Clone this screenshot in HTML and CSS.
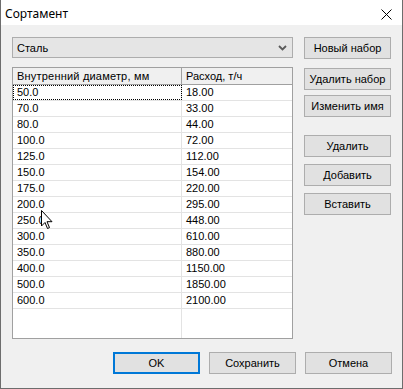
FILE: index.html
```html
<!DOCTYPE html>
<html lang="ru">
<head>
<meta charset="utf-8">
<title>Сортамент</title>
<link rel="stylesheet" href="styles.css">
</head>
<body>
<div class="window">
  <div class="titlebar">
    <span class="title">Сортамент</span>
    <svg class="close" width="11" height="11" viewBox="0 0 11 11"><path d="M0.5 0.5 L10.5 10.5 M10.5 0.5 L0.5 10.5" stroke="#000" stroke-width="1" fill="none"/></svg>
  </div>
  <div class="content">
    <div class="main">
      <div class="left">
        <div class="combo">
          <span>Сталь</span>
          <svg class="chev" width="9" height="6" viewBox="0 0 9 6"><path d="M1 1 L4.5 4.5 L8 1" stroke="#5a5a5a" stroke-width="1.8" fill="none"/></svg>
        </div>
        <div class="grid">
          <div class="row head">
            <div class="c1 wide">Внутренний диаметр, мм</div>
            <div class="c2">Расход, т/ч</div>
          </div>
          <div class="row"><div class="c1 focus">50.0</div><div class="c2">18.00</div></div>
          <div class="row"><div class="c1">70.0</div><div class="c2">33.00</div></div>
          <div class="row"><div class="c1">80.0</div><div class="c2">44.00</div></div>
          <div class="row"><div class="c1">100.0</div><div class="c2">72.00</div></div>
          <div class="row"><div class="c1">125.0</div><div class="c2">112.00</div></div>
          <div class="row"><div class="c1">150.0</div><div class="c2">154.00</div></div>
          <div class="row"><div class="c1">175.0</div><div class="c2">220.00</div></div>
          <div class="row"><div class="c1">200.0</div><div class="c2">295.00</div></div>
          <div class="row"><div class="c1">250.0</div><div class="c2">448.00</div></div>
          <div class="row"><div class="c1">300.0</div><div class="c2">610.00</div></div>
          <div class="row"><div class="c1">350.0</div><div class="c2">880.00</div></div>
          <div class="row"><div class="c1">400.0</div><div class="c2">1150.00</div></div>
          <div class="row"><div class="c1">500.0</div><div class="c2">1850.00</div></div>
          <div class="row"><div class="c1">600.0</div><div class="c2">2100.00</div></div>
          <div class="row filler"><div class="c1"></div><div class="c2"></div></div>
        </div>
      </div>
      <div class="right">
        <button class="btn b1">Новый набор</button>
        <button class="btn b2">Удалить набор</button>
        <button class="btn b3">Изменить имя</button>
        <button class="btn b4">Удалить</button>
        <button class="btn b5">Добавить</button>
        <button class="btn b6">Вставить</button>
      </div>
    </div>
    <div class="footer">
      <button class="btn default">OK</button>
      <button class="btn">Сохранить</button>
      <button class="btn">Отмена</button>
    </div>
  </div>
  <svg class="cursor" width="13" height="20" viewBox="0 0 13 20"><path d="M0.5 0.5 L0.5 16 L4 12.5 L6.5 18.5 L8.5 17.6 L6 11.7 L11 11.7 Z" fill="#fff" stroke="#000" stroke-width="1" stroke-linejoin="miter"/></svg>
</div>
</body>
</html>
```
FILE: styles.css
```css
html, body {
  margin: 0;
  padding: 0;
  background: #f0f0f0;
}
.window {
  position: relative;
  width: 401px;
  height: 388px;
  border-left: 1px solid #6d6d6d;
  border-right: 1px solid #6d6d6d;
  border-bottom: 1px solid #6d6d6d;
  background: #f0f0f0;
  display: flex;
  flex-direction: column;
  font-family: "Liberation Sans", Arial, sans-serif;
  font-size: 11px;
  color: #000;
}
.titlebar {
  height: 25px;
  background: #fff;
  display: flex;
  align-items: center;
  justify-content: space-between;
  padding: 0 10px 0 4px;
  flex-shrink: 0;
}
.title {
  font-family: "Noto Sans", "Liberation Sans", sans-serif;
  font-size: 12px;
  padding-top: 1px;
}
.close {
  display: block;
  margin-top: 3px;
}
.content {
  padding: 12px 10px 0 11px;
  display: flex;
  flex-direction: column;
}
.main {
  display: flex;
  gap: 11px;
}
.left {
  width: 281px;
  display: flex;
  flex-direction: column;
  gap: 9px;
}
.combo {
  height: 19px;
  border: 1px solid #adadad;
  background: #e5e5e5;
  display: flex;
  align-items: center;
  justify-content: space-between;
  padding: 0 5px 0 4px;
}
.chev { display: block; margin-top: 1px; }
.grid {
  height: 270px;
  border: 1px solid #a0a0a0;
  background: #fff;
  display: flex;
  flex-direction: column;
}
.row {
  display: flex;
  height: 15px;
  border-bottom: 1px solid #e3e3e3;
  line-height: 15px;
}
.row.head {
  height: 16px;
  line-height: 16px;
  background: #f0f0f0;
  border-bottom: 1px solid #a0a0a0;
}
.c1 {
  width: 164px;
  padding-left: 4px;
  border-right: 1px solid #e3e3e3;
  box-sizing: content-box;
}
.head .c1 { border-right-color: #a0a0a0; }
.wide { letter-spacing: 0.2px; }
.c2 {
  flex: 1;
  padding-left: 4px;
}
.focus {
  outline: 1px dotted #000;
  outline-offset: -1px;
}
.row.filler {
  flex: 1;
  border-bottom: none;
}
.right {
  width: 87px;
  display: flex;
  flex-direction: column;
}
.btn {
  height: 22px;
  width: 87px;
  border: 1px solid #adadad;
  background: #e1e1e1;
  font-family: "Liberation Sans", Arial, sans-serif;
  font-size: 11px;
  color: #000;
  padding: 0;
  margin: 0;
}
.b2 { margin-top: 9px; }
.b3 { margin-top: 5px; }
.b4 { margin-top: 18px; }
.b5 { margin-top: 7px; }
.b6 { margin-top: 7px; }
.footer {
  display: flex;
  justify-content: flex-end;
  gap: 9px;
  margin-top: 13px;
}
.btn.default {
  border: 2px solid #0078d7;
}
.cursor {
  position: absolute;
  left: 40px;
  top: 210px;
}
```
